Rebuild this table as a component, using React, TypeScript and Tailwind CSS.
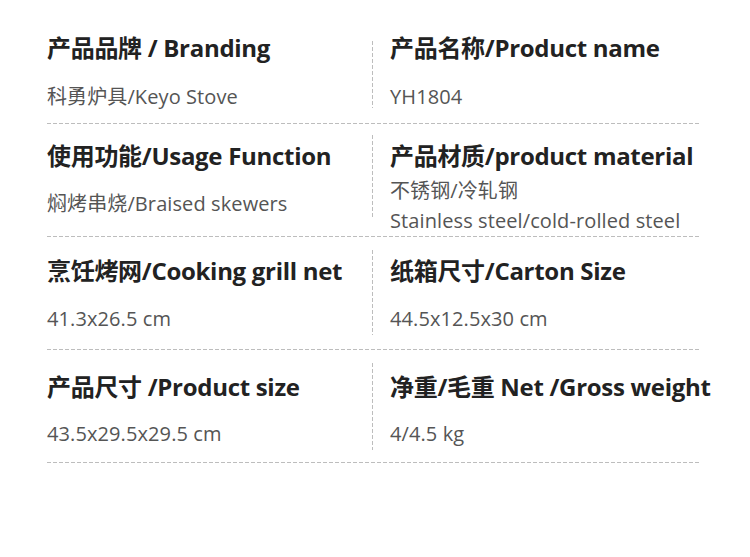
const font = "font-['Open_Sans','Noto_Sans_CJK_SC',sans-serif]";

type Spec = {
  title: string;
  value: string[];
  divTop: number;
  divH: number;
};

const rows: { left: Spec; right: Spec; pt: string; gap: string }[] = [
  {
    pt: "pt-[22px]",
    gap: "mt-[21px]",
    left: { title: "产品品牌 / Branding", value: ["科勇炉具/Keyo Stove"], divTop: 0, divH: 0 },
    right: { title: "产品名称/Product name", value: ["YH1804"], divTop: 30, divH: 67 },
  },
  {
    pt: "pt-[17px]",
    gap: "mt-[20px]",
    left: { title: "使用功能/Usage Function", value: ["焖烤串烧/Braised skewers"], divTop: 0, divH: 0 },
    right: {
      title: "产品材质/product material",
      value: ["不锈钢/冷轧钢", "Stainless steel/cold-rolled steel"],
      divTop: 11,
      divH: 82,
    },
  },
  {
    pt: "pt-[19px]",
    gap: "mt-[20px]",
    left: { title: "烹饪烤网/Cooking grill net", value: ["41.3x26.5 cm"], divTop: 0, divH: 0 },
    right: { title: "纸箱尺寸/Carton Size", value: ["44.5x12.5x30 cm"], divTop: 13, divH: 85 },
  },
  {
    pt: "pt-[22px]",
    gap: "mt-[19px]",
    left: { title: "产品尺寸 /Product size", value: ["43.5x29.5x29.5 cm"], divTop: 0, divH: 0 },
    right: { title: "净重/毛重 Net /Gross weight", value: ["4/4.5 kg"], divTop: 13, divH: 87 },
  },
];

function HLine() {
  return <div className="h-px w-[653px] bg-[repeating-linear-gradient(90deg,#bdbdbd_0_4px,transparent_4px_6px)]" />;
}

function Cell({ spec, gap }: { spec: Spec; gap: string }) {
  const multi = spec.value.length > 1;
  return (
    <div>
      <div className="text-[24px] leading-[30px] font-bold text-[#222] tracking-[-0.3px] whitespace-nowrap">{spec.title}</div>
      {multi ? (
        <div className="mt-[5px] text-[20px] leading-[30px] text-[#555] tracking-[0.1px] whitespace-nowrap">
          {spec.value.map((v) => (
            <div key={v}>{v}</div>
          ))}
        </div>
      ) : (
        <div className={`${gap} text-[20px] leading-[26px] text-[#555] tracking-[0.1px] whitespace-nowrap`}>{spec.value[0]}</div>
      )}
    </div>
  );
}

export default function App() {
  return (
    <div className={`w-[750px] h-[557px] bg-white pl-[47px] pt-[11px] ${font}`}>
      {rows.map((r, i) => (
        <div key={i}>
          <div className="flex h-[112px]">
            <div className={`w-[325px] ${r.pt}`}>
              <Cell spec={r.left} gap={r.gap} />
            </div>
            <div className="w-px">
              <div
                className="w-px bg-[repeating-linear-gradient(180deg,#bdbdbd_0_4px,transparent_4px_6px)]"
                style={{ marginTop: r.right.divTop, height: r.right.divH }}
              />
            </div>
            <div className={`pl-[17px] ${r.pt}`}>
              <Cell spec={r.right} gap={r.gap} />
            </div>
          </div>
          <HLine />
        </div>
      ))}
    </div>
  );
}
